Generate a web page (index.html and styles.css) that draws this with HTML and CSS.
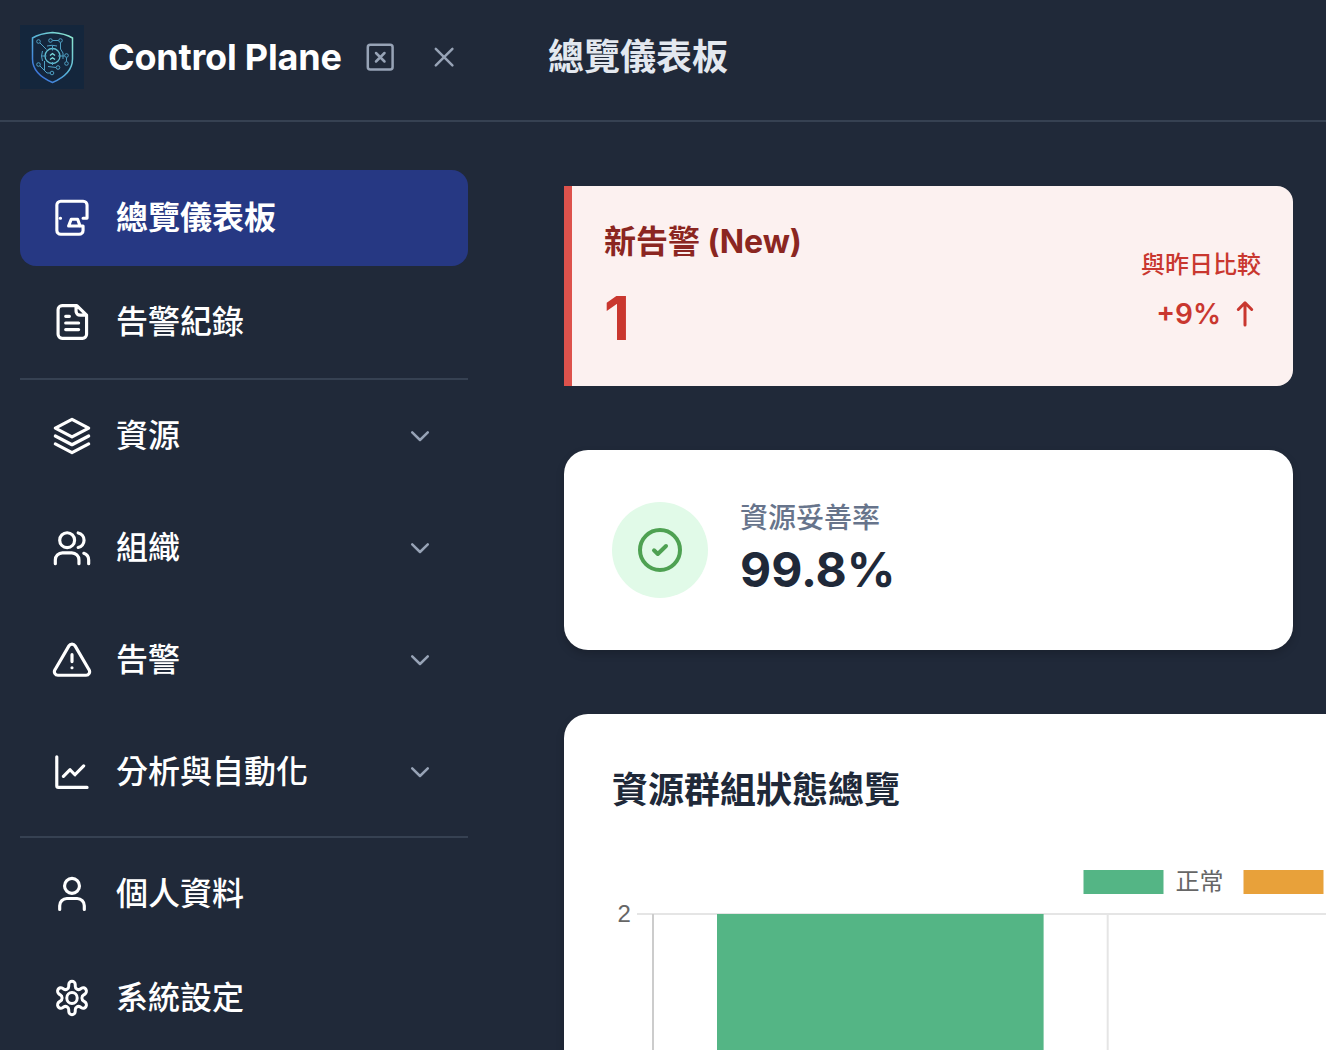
FILE: index.html
```html
<!DOCTYPE html>
<html lang="zh-Hant">
<head>
<meta charset="utf-8">
<title>Control Plane</title>
<link rel="stylesheet" href="styles.css">
</head>
<body>
<div class="app">
  <header class="topbar">
    <div class="brand">
      <svg class="logo" viewBox="0 0 64 64" fill="none">
        <defs><linearGradient id="shield" x1="11" y1="50" x2="53" y2="12" gradientUnits="userSpaceOnUse"><stop offset="0" stop-color="#3566dc"/><stop offset=".5" stop-color="#58b4d8"/><stop offset="1" stop-color="#8ce6cf"/></linearGradient></defs>
        <rect width="64" height="64" fill="#14263c"/>
        <path d="M32.500 7.500C26 8 18 9.500 12.500 13V34C12.500 46 22 53 32.500 57.500C43 53 52.500 46 52.500 34V13C47 9.500 39 8 32.500 7.500Z" stroke="url(#shield)" stroke-width="1.500"/>
        <g stroke="#4fa0c4" stroke-width="1">
          <circle cx="32.500" cy="31" r="7.500" stroke="#62bfd0" stroke-width="1.300"/>
          <circle cx="18.500" cy="16.500" r="1.800"/><circle cx="30.500" cy="15.500" r="1.800"/><circle cx="40.500" cy="15.500" r="1.800"/><circle cx="46.500" cy="30.500" r="1.800"/><circle cx="46.500" cy="38.500" r="1.800"/><circle cx="18.500" cy="39.500" r="1.800"/><circle cx="38" cy="42.500" r="1.800"/><circle cx="32" cy="48" r="1.800"/>
          <path d="M20 18L26.500 24.500M32.500 15.500H38.500M40.500 17.500V24L43 28V34M46.500 32.500V36.500M38 31H44.500M32.500 21V25.500M32.500 37V40M22 31H26.500M28 41.500L36 42.500M20 41L27 48H30M24.500 36V45M22.500 26Q20.500 31 22.500 36M27 21Q32 19.500 37 21"/>
          <path d="M30 30.500L32.500 28.500L35 30.500M30 34.500L32.500 32.700L35 34.500" stroke="#7ce0e0" stroke-width="1.300"/>
        </g>
      </svg>
      <span class="brand-name">Control Plane</span>
      <svg class="icon-sm pin" viewBox="0 0 32 32"><rect x="3.800" y="3.800" width="24.800" height="24.800" rx="2.500"/><path d="M12 12l8.500 8.500m0-8.500l-8.500 8.500"/></svg>
      <svg class="icon-sm close" viewBox="0 0 32 32"><path d="M7.800 7.800l16.600 16.600m0-16.600l-16.600 16.600"/></svg>
    </div>
    <h1 class="page-title">總覽儀表板</h1>
  </header>

  <div class="body">
    <nav class="sidebar">
      <a class="item active"><svg class="icon fine" viewBox="-.3 -.6 41.200 41.200"><path d="M35.800 20V6.700a4 4 0 0 0-4-4H8.700a4 4 0 0 0-4 4v26.100a4 4 0 0 0 4 4h19a4 4 0 0 0 4-4V28.300H16.800l2.700-7h6.600l2.500 7M31.700 20.300h4M8.200 20.300h.3"/></svg><span>總覽儀表板</span></a>
      <a class="item"><svg class="icon" viewBox="-.35 -.35 24.700 24.700"><path d="M14.500 2.200v3.100a2.500 2.500 0 0 0 2.500 2.500h4M15 1.900H5.900a2.500 2.500 0 0 0-2.500 2.500v15.200a2.500 2.500 0 0 0 2.500 2.500h12.600a2.500 2.500 0 0 0 2.500-2.500V7.700ZM8.100 16.700h8M8.100 12.600h8M8.100 8.500h2.300"/></svg><span>告警紀錄</span></a>
      <hr>
      <div class="groups">
        <a class="item"><svg class="icon" viewBox="-.35 -.35 24.700 24.700"><path d="M12 1.700l10.300 5.400L12 12.500 1.700 7.100ZM1.700 12L12 17.400 22.300 12M1.700 16.900L12 22.300l10.300-5.400"/></svg><span>資源</span><svg class="chev" viewBox="0 0 32 32"><path d="M8.200 12.300l7.800 7.700 7.800-7.700"/></svg></a>
        <a class="item"><svg class="icon" viewBox="-.35 -.35 24.700 24.700"><path d="M1.700 21.700v-2.300a4.400 4.400 0 0 1 4.400-4.400h5.800a4.400 4.400 0 0 1 4.400 4.400v2.300M15.800 2.700a4.600 4.600 0 0 1 0 9M19.300 15.300a4.400 4.400 0 0 1 3 4.100v2.300"/><circle cx="9" cy="7.200" r="4.600"/></svg><span>組織</span><svg class="chev" viewBox="0 0 32 32"><path d="M8.200 12.300l7.800 7.700 7.800-7.700"/></svg></a>
        <a class="item"><svg class="icon" viewBox="-.35 -.35 24.700 24.700"><path d="M12 8.700v4.300M12 16.800h.01M10.100 3.300L1.500 18a2.200 2.200 0 0 0 1.900 3.400h17.200a2.200 2.200 0 0 0 1.900-3.400L13.900 3.300a2.200 2.200 0 0 0-3.800 0Z"/></svg><span>告警</span><svg class="chev" viewBox="0 0 32 32"><path d="M8.200 12.300l7.800 7.700 7.800-7.700"/></svg></a>
        <a class="item"><svg class="icon" viewBox="-.35 -.35 24.700 24.700"><path d="M2.600 2.600v17.900a1 1 0 0 0 1 1h17.700M6.700 14.700L10.800 10.600l3 3.100 5.400-5.500"/></svg><span>分析與自動化</span><svg class="chev" viewBox="0 0 32 32"><path d="M8.200 12.300l7.800 7.700 7.800-7.700"/></svg></a>
      </div>
      <hr class="lower">
      <a class="item"><svg class="icon" viewBox="-.35 -.35 24.700 24.700"><circle cx="12" cy="7" r="4.600"/><path d="M4.400 21.500v-2.300a4.400 4.400 0 0 1 4.400-4.400h6.400a4.400 4.400 0 0 1 4.400 4.400v2.300"/></svg><span>個人資料</span></a>
      <a class="item"><svg class="icon fine" viewBox="-.6 -.6 41.200 41.200"><g transform="translate(.8 0) scale(.96 1)"><circle cx="20" cy="20" r="5.600"/><path d="M16.500 6.300a3.500 3.500 0 0 1 7 0v1.500a3.500 3.500 0 0 0 5.300 3l1.300-.8a3.500 3.500 0 0 1 3.700 6l-1.300.9a3.500 3.500 0 0 0 0 6.200l1.300.9a3.500 3.500 0 0 1-3.700 6l-1.300-.8a3.500 3.500 0 0 0-5.300 3v1.500a3.500 3.500 0 0 1-7 0v-1.500a3.500 3.500 0 0 0-5.300-3l-1.300.8a3.500 3.500 0 0 1-3.700-6l1.300-.9a3.500 3.500 0 0 0 0-6.200l-1.300-.9a3.500 3.500 0 0 1 3.700-6l1.300.8a3.500 3.500 0 0 0 5.300-3Z"/></g></svg><span>系統設定</span></a>
    </nav>

    <main class="content">
      <section class="alert">
        <div><h2 class="alert-title">新告警 (New)</h2><div class="alert-count">1</div></div>
        <div class="compare"><div class="compare-label">與昨日比較</div><div class="delta"><span>+9%</span><svg class="arrow" viewBox="0 0 32 32"><path d="M16 27V5M9.300 11.500L16 4.800l6.700 6.700"/></svg></div></div>
      </section>
      <section class="card stat">
        <div class="badge"><svg class="check" viewBox="0 0 48 48"><circle cx="24" cy="24" r="20"/><path d="M18 24.300l3.800 3.700 8.200-8"/></svg></div>
        <div><div class="stat-label">資源妥善率</div><div class="stat-value">99.8%</div></div>
      </section>
      <section class="card chart">
        <h2 class="chart-title">資源群組狀態總覽</h2>
        <svg class="plot" width="740" height="230" viewBox="612 840 740 230">
          <rect x="1083.500" y="870" width="80" height="24" fill="#54b585"/>
          <text x="1175.500" y="890">正常</text>
          <rect x="1243.500" y="870" width="80" height="24" fill="#e8a13a"/>
          <path d="M637 914H1352M1107.700 914V1070" stroke="#e5e5e5" stroke-width="2"/>
          <path d="M653 914V1070" stroke="#ccc" stroke-width="2"/>
          <rect x="717" y="914" width="326.600" height="156" fill="#54b585"/>
          <text x="617.500" y="922">2</text>
        </svg>
      </section>
    </main>
  </div>
</div>
</body>
</html>
```
FILE: styles.css
```css
* { box-sizing: border-box; margin: 0; }
body { background: #202939; font-family: Inter, "Noto Sans CJK TC", sans-serif; color: #fff; overflow: hidden; }
.app { height: 1050px; overflow: hidden; }
svg { display: block; flex: none; fill: none; }
.topbar { display: flex; height: 122px; border-bottom: 2px solid #364152; }
.brand { display: flex; align-items: center; width: 500px; height: 114px; padding-left: 20px; flex: none; }
.logo { width: 64px; height: 64px; }
.brand-name { margin-left: 24px; width: 232px; font-size: 36px; font-weight: 650; white-space: nowrap; letter-spacing: -0.2px; }
.icon-sm { width: 32px; height: 32px; stroke: #97a3b6; stroke-width: 2.5; stroke-linecap: round; stroke-linejoin: round; }
.pin { margin-left: 24px; }
.close { margin-left: 32px; }
.page-title { height: 115px; line-height: 115px; padding-left: 48px; font-size: 36px; font-weight: 700; color: #e3e8ef; }
.body { display: flex; height: 928px; }
.sidebar { width: 500px; flex: none; padding: 48px 32px 0 20px; display: flex; flex-direction: column; gap: 8px; }
.groups { display: flex; flex-direction: column; gap: 16px; margin-bottom: 8px; }
.item { display: flex; align-items: center; height: 96px; flex: none; padding: 0 32px; gap: 24px; border-radius: 16px; font-size: 32px; font-weight: 500; line-height: 48px; }
.active { background: #263883; font-weight: 700; }
.icon { width: 40px; height: 40px; stroke: #fff; stroke-width: 1.95; stroke-linecap: round; stroke-linejoin: round; }
.fine { stroke-width: 3.2; }
.chev { width: 32px; height: 32px; margin-left: auto; stroke: #97a3b6; stroke-width: 2.5; stroke-linecap: round; stroke-linejoin: round; }
hr { border: 0; height: 2px; flex: none; background: #364152; }
.content { flex: 1; min-width: 0; padding: 64px 33px 0 64px; display: flex; flex-direction: column; gap: 64px; }
.alert { display: flex; align-items: center; justify-content: space-between; height: 200px; flex: none; padding: 0 32px; background: #fcf1f0; border-left: 8px solid #dd524c; border-radius: 0 16px 16px 0; color: #c9372f; }
.alert-title { font-size: 32px; line-height: 48px; font-weight: 700; color: #8b2621; }
.alert-count { margin-top: 16px; font-size: 60px; line-height: 72px; font-weight: 700; }
.compare { text-align: right; padding-top: 11px; }
.compare-label { font-size: 24px; line-height: 32px; font-weight: 500; }
.delta { display: flex; align-items: center; justify-content: flex-end; gap: 8px; margin-top: 13px; font-size: 28px; line-height: 40px; font-weight: 600; }
.arrow { width: 32px; height: 32px; stroke: #c9372f; stroke-width: 3; stroke-linecap: round; stroke-linejoin: round; }
.card { background: #fff; border-radius: 24px; color: #202939; flex: none; box-shadow: 0 4px 8px rgba(0,0,0,.18); }
.stat { display: flex; align-items: center; gap: 32px; height: 200px; padding: 0 48px; }
.badge { width: 96px; height: 96px; border-radius: 50%; background: #e1fae8; display: flex; align-items: center; justify-content: center; }
.check { width: 48px; height: 48px; stroke: #4ea152; stroke-width: 4; stroke-linecap: round; stroke-linejoin: round; }
.stat-label { font-size: 28px; line-height: 40px; font-weight: 500; color: #67748b; }
.stat-value { font-size: 48px; line-height: 64px; font-weight: 700; }
.chart { width: 820px; height: 400px; padding: 48px; }
.chart-title { font-size: 36px; line-height: 56px; font-weight: 700; }
.plot { margin-top: 22px; }
.plot text { font: 24px "Liberation Sans", "Noto Sans CJK TC", sans-serif; fill: #666; }
```
